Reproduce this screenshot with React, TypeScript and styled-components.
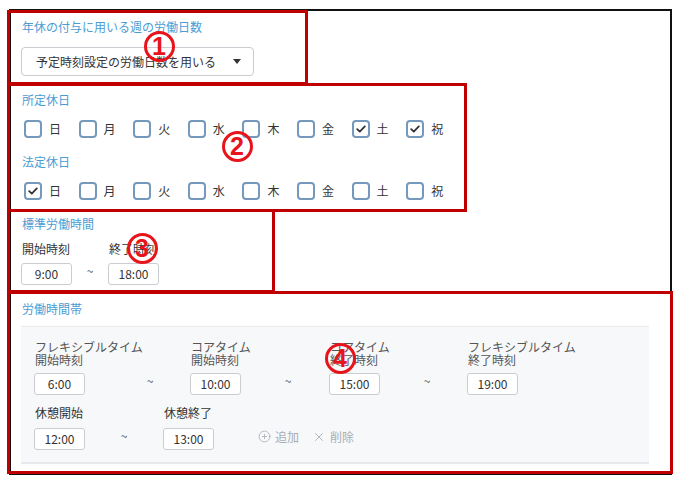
import React from "react";
import styled, { createGlobalStyle } from "styled-components";
import { CirclePlus, X } from "lucide-react";

const Global = createGlobalStyle`
  html, body { margin: 0; padding: 0; background: #fff; }
  body { font-family: "Noto Sans CJK JP", "Noto Sans", sans-serif; color: #333; }
  * { box-sizing: border-box; }
`;

const Page = styled.div`
  position: relative;
  width: 681px;
  height: 481px;
  overflow: hidden;
`;

const Frame = styled.div`
  margin: 9px 0 0 9px;
  width: 663px;
  height: 466px;
  border: 2px solid #111;
  padding: 8px 0 0 10px;
  display: flex;
  flex-direction: column;
  align-items: flex-start;
`;

const SectionLabel = styled.div<{ $mt?: number }>`
  font-size: 12px;
  line-height: 16px;
  color: #4a9cd3;
  margin-top: ${(p) => p.$mt ?? 0}px;
  padding-left: 1px;
`;

const Select = styled.div`
  margin-top: 12px;
  width: 233px;
  height: 29px;
  border: 1px solid #c9cdd2;
  border-radius: 4px;
  display: flex;
  align-items: center;
  justify-content: space-between;
  padding: 0 12px 0 14px;
  font-size: 12px;
  color: #333;
  background: #fff;
`;

const Caret = styled.span`
  width: 0;
  height: 0;
  border-left: 4.5px solid transparent;
  border-right: 4.5px solid transparent;
  border-top: 5px solid #333;
`;

const CheckRow = styled.div`
  margin-top: 12px;
  padding-left: 3px;
  display: flex;
`;

const CheckItem = styled.label`
  width: 54.6px;
  display: flex;
  align-items: center;
  gap: 7px;
  font-size: 12px;
  line-height: 18px;
  color: #333;
`;

const Box = styled.span`
  width: 18px;
  height: 18px;
  border: 2px solid #7499bc;
  border-radius: 4px;
  display: flex;
  align-items: center;
  justify-content: center;
  background: #fff;
`;

const SubLabel = styled.div<{ $mt?: number }>`
  font-size: 12px;
  line-height: 16px;
  color: #333;
  margin-top: ${(p) => p.$mt ?? 0}px;
  white-space: nowrap;
  padding-left: 1px;
`;

const PanelLabel = styled.div`
  font-size: 12px;
  line-height: 12.5px;
  color: #555;
  white-space: nowrap;
  padding-left: 1px;
`;

const TimeRow = styled.div<{ $mt?: number }>`
  display: flex;
  align-items: flex-end;
  margin-top: ${(p) => p.$mt ?? 0}px;
`;

const Field = styled.div<{ $w: number }>`
  width: ${(p) => p.$w}px;
  display: flex;
  flex-direction: column;
  align-items: flex-start;
`;

const TimeInput = styled.div<{ $mt: number }>`
  margin-top: ${(p) => p.$mt}px;
  width: 51px;
  height: 22px;
  border: 1px solid #c9cdd2;
  border-radius: 3px;
  background: #fff;
  font-size: 12px;
  line-height: 20px;
  text-align: center;
  color: #333;
`;

const Tilde = styled.div<{ $w: number }>`
  width: ${(p) => p.$w}px;
  height: 22px;
  display: flex;
  align-items: center;
  justify-content: center;
  padding-bottom: 8px;
  font-size: 12px;
  color: #555;
`;

const Panel = styled.div`
  margin-top: 9px;
  width: 628px;
  background: #f7f8fa;
  border-top: 1px solid #e9ebee;
  border-bottom: 2px solid #e6e8eb;
  padding: 14px 0 12px 13px;
`;

const Actions = styled.div`
  margin-left: 44px;
  height: 22px;
  display: flex;
  align-items: center;
  gap: 13px;
  padding-bottom: 5px;
`;

const ActionButton = styled.span`
  display: flex;
  align-items: center;
  gap: 4px;
  font-size: 12px;
  color: #a9adb2;
`;

const Annotation = styled.div<{ $x: number; $y: number; $w: number; $h: number }>`
  position: absolute;
  left: ${(p) => p.$x}px;
  top: ${(p) => p.$y}px;
  width: ${(p) => p.$w}px;
  height: ${(p) => p.$h}px;
  border: 3px solid #c00000;
  pointer-events: none;
`;

const Marker = styled.div<{ $x: number; $y: number }>`
  position: absolute;
  left: ${(p) => p.$x - 15.5}px;
  top: ${(p) => p.$y - 15.5}px;
  width: 31px;
  height: 31px;
  border: 3px solid #e8141c;
  border-radius: 50%;
  color: #e8141c;
  font-family: "Liberation Sans", Arial, sans-serif;
  font-weight: 700;
  font-size: 25px;
  line-height: 25px;
  text-align: center;
`;

const days = ["日", "月", "火", "水", "木", "金", "土", "祝"];

const Check = () => (
  <svg width="10" height="8" viewBox="0 0 10 8">
    <path d="M1.2 4.2 L3.8 6.6 L8.8 1.4" fill="none" stroke="#333" strokeWidth="1.8" strokeLinecap="round" strokeLinejoin="round" />
  </svg>
);

const DayRow = ({ checked }: { checked: string[] }) => (
  <CheckRow>
    {days.map((d) => (
      <CheckItem key={d}>
        <Box>{checked.includes(d) && <Check />}</Box>
        {d}
      </CheckItem>
    ))}
  </CheckRow>
);

export default function App() {
  return (
    <Page>
      <Global />
      <Frame>
        <SectionLabel>年休の付与に用いる週の労働日数</SectionLabel>
        <Select>
          <span>予定時刻設定の労働日数を用いる</span>
          <Caret />
        </Select>

        <SectionLabel $mt={16}>所定休日</SectionLabel>
        <DayRow checked={["土", "祝"]} />
        <SectionLabel $mt={16}>法定休日</SectionLabel>
        <DayRow checked={["日"]} />

        <SectionLabel $mt={16}>標準労働時間</SectionLabel>
        <TimeRow $mt={9}>
          <Field $w={51}>
            <SubLabel>開始時刻</SubLabel>
            <TimeInput $mt={6}>9:00</TimeInput>
          </Field>
          <Tilde $w={36}>~</Tilde>
          <Field $w={51}>
            <SubLabel>終了時刻</SubLabel>
            <TimeInput $mt={6}>18:00</TimeInput>
          </Field>
        </TimeRow>

        <SectionLabel $mt={16}>労働時間帯</SectionLabel>
        <Panel>
          <TimeRow>
            <Field $w={76}>
              <PanelLabel>フレキシブルタイム<br />開始時刻</PanelLabel>
              <TimeInput $mt={7}>6:00</TimeInput>
            </Field>
            <Tilde $w={80}>~</Tilde>
            <Field $w={57}>
              <PanelLabel>コアタイム<br />開始時刻</PanelLabel>
              <TimeInput $mt={7}>10:00</TimeInput>
            </Field>
            <Tilde $w={82}>~</Tilde>
            <Field $w={58}>
              <PanelLabel>コアタイム<br />終了時刻</PanelLabel>
              <TimeInput $mt={7}>15:00</TimeInput>
            </Field>
            <Tilde $w={80}>~</Tilde>
            <Field $w={120}>
              <PanelLabel>フレキシブルタイム<br />終了時刻</PanelLabel>
              <TimeInput $mt={7}>19:00</TimeInput>
            </Field>
          </TimeRow>
          <TimeRow $mt={10}>
            <Field $w={51}>
              <SubLabel>休憩開始</SubLabel>
              <TimeInput $mt={7}>12:00</TimeInput>
            </Field>
            <Tilde $w={78}>~</Tilde>
            <Field $w={51}>
              <SubLabel>休憩終了</SubLabel>
              <TimeInput $mt={7}>13:00</TimeInput>
            </Field>
            <Actions>
              <ActionButton>
                <CirclePlus size={13} strokeWidth={1.5} />
                追加
              </ActionButton>
              <ActionButton>
                <X size={14} strokeWidth={1.5} />
                削除
              </ActionButton>
            </Actions>
          </TimeRow>
        </Panel>
      </Frame>

      <Annotation $x={7} $y={10} $w={301} $h={75} />
      <Annotation $x={7} $y={83} $w={460} $h={129} />
      <Annotation $x={7} $y={209} $w={268} $h={84} />
      <Annotation $x={7} $y={291} $w={666} $h={183} />

      <Marker $x={159} $y={46}>1</Marker>
      <Marker $x={237} $y={146}>2</Marker>
      <Marker $x={142} $y={248}>3</Marker>
      <Marker $x={340} $y={358}>4</Marker>
    </Page>
  );
}
